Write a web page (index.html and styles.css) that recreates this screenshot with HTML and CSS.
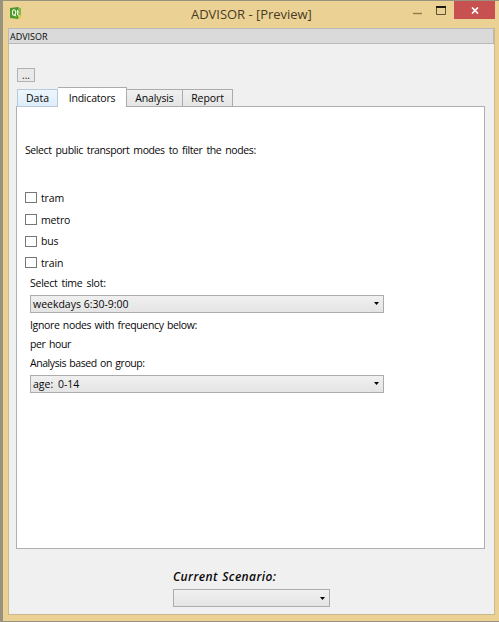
FILE: index.html
```html
<!DOCTYPE html>
<html lang="en">
<head>
<meta charset="utf-8">
<title>ADVISOR - [Preview]</title>
<link rel="stylesheet" href="styles.css">
</head>
<body>
<div class="window">
  <header class="titlebar">
    <svg class="app-icon" width="12" height="13" viewBox="0 0 12 13">
      <path d="M0 1L8 0L11 2V10L8 12L0 11Z" fill="#4d982b"/>
      <path d="M8 0L11 2V10L8 12Z" fill="#80b94c"/>
      <path d="M9 8L12 9L10 11L8 12Z" fill="#e7d34a"/>
      <ellipse cx="4" cy="5.5" rx="1.6" ry="2.8" fill="none" stroke="#eff6df" stroke-width="1.1"/>
      <path d="M4.5 7L6 9.5M7.5 3V8H9M6.5 5H9" fill="none" stroke="#eff6df"/>
    </svg>
    <h1 class="title">ADVISOR - [Preview]</h1>
    <div class="controls">
      <svg width="40" height="20" viewBox="0 0 40 20">
        <path d="M0 12.5H9" stroke="#97774b" stroke-width="1.4"/>
        <path d="M23.5 6V13.5H32.5V6" fill="none" stroke="#5f5136"/>
        <path d="M23 6H33" stroke="#201b12" stroke-width="2"/>
      </svg>
      <div class="close">
        <svg width="8" height="7" viewBox="0 0 8 7"><path d="M1 .5L7 6.5M7 .5L1 6.5" stroke="#fff" stroke-width="1.7"/></svg>
      </div>
    </div>
  </header>
  <main class="client">
    <div class="dock"><span>ADVISOR</span></div>
    <button class="more">...</button>
    <nav class="tabs">
      <div class="tab data">Data</div>
      <div class="tab active">Indicators</div>
      <div class="tab analysis">Analysis</div>
      <div class="tab report">Report</div>
    </nav>
    <section class="panel">
      <p class="intro">Select public transport modes to filter the nodes:</p>
      <div class="checks">
        <label class="check"><i></i><span>tram</span></label>
        <label class="check"><i></i><span>metro</span></label>
        <label class="check"><i></i><span>bus</span></label>
        <label class="check"><i></i><span>train</span></label>
      </div>
      <div class="fields">
        <p class="slot">Select time slot:</p>
        <div class="combo"><span class="week">weekdays 6:30-9:00</span><svg width="5" height="3"><path d="M0 0H5L2.5 3Z"/></svg></div>
        <p class="ignore">Ignore nodes with frequency below:</p>
        <p class="hour">per hour</p>
        <p class="group">Analysis based on group:</p>
        <div class="combo"><span class="age">age: 0-14</span><svg width="5" height="3"><path d="M0 0H5L2.5 3Z"/></svg></div>
      </div>
    </section>
    <footer class="scenario">
      <p class="current">Current Scenario:</p>
      <div class="combo small"><span></span><svg width="5" height="3"><path d="M0 0H5L2.5 3Z"/></svg></div>
    </footer>
  </main>
</div>
</body>
</html>
```
FILE: styles.css
```css
* { box-sizing: border-box; }
body { margin: 0; background: #98937f; font: 10.5px/16px "Open Sans", sans-serif; color: #080808; overflow: hidden; }
p, h1 { margin: 0; font-weight: 400; white-space: nowrap; }
.window { height: 622px; padding: 0 4px 6px 5px; background: #ebd294; border: solid #98937f; border-width: 1px 0 1px 3px; }
.titlebar { height: 27px; display: flex; align-items: flex-start; }
.app-icon { margin: 6px 0 0 2px; }
.title { width: 121px; margin: 3px 0 0 169px; font-size: 13px; line-height: 20px; color: #493b25; letter-spacing: -.03px; }
.controls { display: flex; margin-left: auto; margin-right: 1px; }
.controls > svg { margin-right: 1px; }
.close { width: 41px; height: 18px; margin-right: -1px; background: #c75050; display: flex; align-items: center; justify-content: center; }
.client { height: 587px; width: 487px; border: 1px solid #c9b98e; border-top: 0; background: #f0f0f0; }
.dock { height: 16px; margin: 0 0 0 -1px; padding-left: 1px; border: 1px solid #b8b8b8; background: #dadada; font-size: 9px; line-height: 16px; }
.more { display: block; width: 18px; height: 14px; margin: 24px 0 0 8px; padding: 0; border: 1px solid #adb2b7; background: #e9e9e9; font: 10px/10px "Open Sans", sans-serif; color: #191919; }
.tabs { display: flex; height: 20px; margin: 5px 0 0 8px; align-items: flex-end; position: relative; }
.tab { height: 18px; border: 1px solid #acacac; border-left: 0; background: linear-gradient(#f0f0f0, #e5e5e5); text-align: center; white-space: nowrap; line-height: 17px; }
.data { width: 41px; border-color: #b5cbdc; border-left: 1px solid #b5cbdc; background: linear-gradient(#edf6fd, #deedfa); }
.active { width: 69px; height: 20px; background: #fff; border-bottom: 0; line-height: 20px; letter-spacing: -.2px; }
.analysis { width: 56px; letter-spacing: -.15px; }
.report { width: 50px; letter-spacing: -.1px; }
.panel { width: 469px; height: 443px; margin: -1px 0 0 7px; padding: 35px 0 0 8px; background: #fff; border: 1px solid #acb0b3; }
.intro { letter-spacing: -.4px; word-spacing: 1.7px; }
.checks { margin-top: 29px; }
.check { display: flex; height: 21.7px; align-items: center; gap: 4px; letter-spacing: -.15px; }
.check i { width: 12px; height: 11px; border: 1px solid #777; background: #fff; }
.fields { margin-left: 5px; }
.fields > p { height: 19px; line-height: 19px; letter-spacing: -.35px; word-spacing: 1px; }
.fields > .slot { letter-spacing: -.25px; word-spacing: 1.5px; }
.fields > .group { letter-spacing: -.43px; }
.combo { display: flex; align-items: center; justify-content: space-between; width: 354px; height: 18px; padding: 0 4px 0 2px; border: 1px solid #acacac; background: linear-gradient(#f0f0f0, #e4e4e4); }
.age { word-spacing: 2px; }
.fields > .combo + p { margin-top: 3px; }
.fields > .combo { margin-top: 2px; }
.scenario { margin: 20px 0 0 164px; }
.current { height: 16px; font-size: 12px; font-style: italic; font-weight: 600; letter-spacing: .4px; word-spacing: 1px; }
.small { width: 157px; margin-top: 4px; }
```
